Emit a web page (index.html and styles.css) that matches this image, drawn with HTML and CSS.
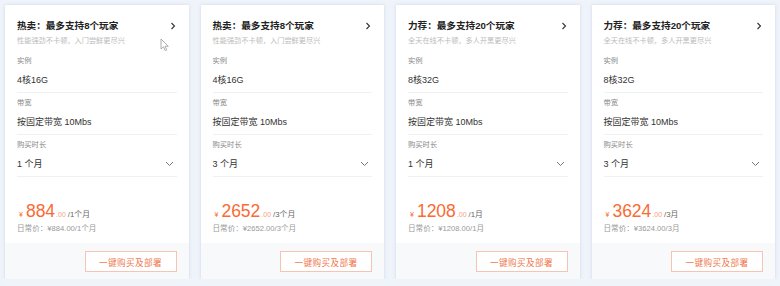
FILE: index.html
```html
<!DOCTYPE html>
<html lang="zh">
<head>
<meta charset="utf-8">
<link rel="stylesheet" href="styles.css">
</head>
<body>
<div class="grid">
  <div class="card">
    <div class="body">
      <div class="title"><span>热卖：最多支持8个玩家</span><svg class="arrow" width="6" height="8" viewBox="0 0 6 8"><path d="M1.5 1 L4.5 4 L1.5 7" fill="none" stroke="#333" stroke-width="1.1"/></svg></div>
      <div class="sub">性能强劲不卡顿，入门尝鲜更尽兴</div>
      <div class="field"><div class="label">实例</div><div class="value">4核16G</div></div>
      <div class="field"><div class="label">带宽</div><div class="value">按固定带宽 10Mbs</div></div>
      <div class="field"><div class="label">购买时长</div><div class="value select"><span>1 个月</span><svg width="9" height="6" viewBox="0 0 9 6"><path d="M1 1 L4.5 4.5 L8 1" fill="none" stroke="#777" stroke-width="1"/></svg></div></div>
      <div class="price"><span class="yen">¥</span><span class="num">884</span><span class="dec">.00</span><span class="per">/1个月</span></div>
      <div class="daily">日常价：¥884.00/1个月</div>
    </div>
    <div class="foot"><button class="buy">一键购买及部署</button></div>
    <svg class="cursor" width="10" height="14" viewBox="0 0 10 14"><path d="M1 1 L1 11 L3.5 8.8 L5.3 12.6 L6.8 11.9 L5.1 8.3 L8.3 8.3 Z" fill="#fff" stroke="#999" stroke-width="0.8"/></svg>
  </div>
  <div class="card">
    <div class="body">
      <div class="title"><span>热卖：最多支持8个玩家</span><svg class="arrow" width="6" height="8" viewBox="0 0 6 8"><path d="M1.5 1 L4.5 4 L1.5 7" fill="none" stroke="#333" stroke-width="1.1"/></svg></div>
      <div class="sub">性能强劲不卡顿，入门尝鲜更尽兴</div>
      <div class="field"><div class="label">实例</div><div class="value">4核16G</div></div>
      <div class="field"><div class="label">带宽</div><div class="value">按固定带宽 10Mbs</div></div>
      <div class="field"><div class="label">购买时长</div><div class="value select"><span>3 个月</span><svg width="9" height="6" viewBox="0 0 9 6"><path d="M1 1 L4.5 4.5 L8 1" fill="none" stroke="#777" stroke-width="1"/></svg></div></div>
      <div class="price"><span class="yen">¥</span><span class="num">2652</span><span class="dec">.00</span><span class="per">/3个月</span></div>
      <div class="daily">日常价：¥2652.00/3个月</div>
    </div>
    <div class="foot"><button class="buy">一键购买及部署</button></div>
  </div>
  <div class="card">
    <div class="body">
      <div class="title"><span>力荐：最多支持20个玩家</span><svg class="arrow" width="6" height="8" viewBox="0 0 6 8"><path d="M1.5 1 L4.5 4 L1.5 7" fill="none" stroke="#333" stroke-width="1.1"/></svg></div>
      <div class="sub">全天在线不卡顿，多人开黑更尽兴</div>
      <div class="field"><div class="label">实例</div><div class="value">8核32G</div></div>
      <div class="field"><div class="label">带宽</div><div class="value">按固定带宽 10Mbs</div></div>
      <div class="field"><div class="label">购买时长</div><div class="value select"><span>1 个月</span><svg width="9" height="6" viewBox="0 0 9 6"><path d="M1 1 L4.5 4.5 L8 1" fill="none" stroke="#777" stroke-width="1"/></svg></div></div>
      <div class="price"><span class="yen">¥</span><span class="num">1208</span><span class="dec">.00</span><span class="per">/1月</span></div>
      <div class="daily">日常价：¥1208.00/1月</div>
    </div>
    <div class="foot"><button class="buy">一键购买及部署</button></div>
  </div>
  <div class="card">
    <div class="body">
      <div class="title"><span>力荐：最多支持20个玩家</span><svg class="arrow" width="6" height="8" viewBox="0 0 6 8"><path d="M1.5 1 L4.5 4 L1.5 7" fill="none" stroke="#333" stroke-width="1.1"/></svg></div>
      <div class="sub">全天在线不卡顿，多人开黑更尽兴</div>
      <div class="field"><div class="label">实例</div><div class="value">8核32G</div></div>
      <div class="field"><div class="label">带宽</div><div class="value">按固定带宽 10Mbs</div></div>
      <div class="field"><div class="label">购买时长</div><div class="value select"><span>3 个月</span><svg width="9" height="6" viewBox="0 0 9 6"><path d="M1 1 L4.5 4.5 L8 1" fill="none" stroke="#777" stroke-width="1"/></svg></div></div>
      <div class="price"><span class="yen">¥</span><span class="num">3624</span><span class="dec">.00</span><span class="per">/3月</span></div>
      <div class="daily">日常价：¥3624.00/3月</div>
    </div>
    <div class="foot"><button class="buy">一键购买及部署</button></div>
  </div>
</div>
</body>
</html>
```
FILE: styles.css
```css
html, body {
  margin: 0;
  padding: 0;
  background: #eff3fa;
  font-family: "Liberation Sans", "Noto Sans CJK SC", sans-serif;
}
.grid {
  display: grid;
  grid-template-columns: repeat(4, 1fr);
  gap: 12px;
  padding: 5px 5px 0;
  width: 770px;
}
.card {
  position: relative;
  background: #fff;
  height: 274px;
  display: flex;
  flex-direction: column;
  box-shadow: 0 0 3px rgba(170, 182, 205, 0.45);
}
.body {
  padding: 13px 12px 0;
  flex: 1;
}
.title {
  display: flex;
  justify-content: space-between;
  align-items: center;
  height: 16px;
  line-height: 16px;
  font-size: 9.6px;
  font-weight: bold;
  color: #222;
}
.title .arrow { margin-right: 1px; }
.sub {
  height: 14px;
  line-height: 14px;
  font-size: 7.2px;
  color: #bbb;
  margin-bottom: 3px;
}
.field {
  padding: 2px 0;
  border-bottom: 1px solid #eef0f2;
}
.label {
  height: 16px;
  line-height: 16px;
  font-size: 7.3px;
  color: #888;
}
.value {
  margin-top: 1px;
  height: 20px;
  line-height: 20px;
  font-size: 9px;
  color: #333;
}
.select {
  display: flex;
  justify-content: space-between;
  align-items: center;
}
.select svg { margin-right: 3px; }
.price {
  margin-top: 23px;
  height: 22px;
  line-height: 22px;
  display: flex;
  align-items: baseline;
  color: #fa6a33;
}
.yen { font-size: 7px; margin-left: 2px; margin-right: 3px; }
.num { font-size: 17.5px; }
.dec { font-size: 7px; color: #f7a07f; margin-left: 1px; }
.per { font-size: 7.8px; color: #666; margin-left: 2px; }
.daily {
  height: 14px;
  line-height: 14px;
  font-size: 7.6px;
  color: #999;
}
.foot {
  height: 36px;
  background: #f8f9fa;
  display: flex;
  justify-content: flex-end;
  align-items: center;
  padding: 0 12px;
}
.buy {
  width: 92px;
  height: 21px;
  border: 1px solid #f7c4b4;
  background: #fff;
  color: #f0774c;
  font-family: "Liberation Sans", "Noto Sans CJK SC", sans-serif;
  font-size: 8.6px;
  letter-spacing: 0.4px;
  padding: 0;
  margin-top: 1px;
}
.cursor {
  position: absolute;
  left: 155px;
  top: 33px;
}
```
